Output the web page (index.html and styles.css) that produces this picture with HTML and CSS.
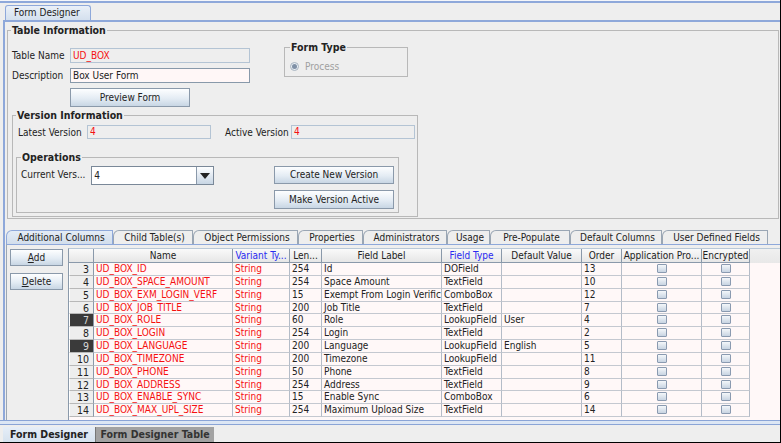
FILE: index.html
```html
<!DOCTYPE html>
<html>
<head>
<meta charset="utf-8">
<link rel="stylesheet" href="styles.css">
</head>
<body>
<div class="window">
  <div class="topline"></div>
  <div class="toptabs"><div class="ttab">Form Designer</div></div>
  <div class="main">
    <fieldset class="tinfo">
      <legend>Table Information</legend>
      <div class="toprow">
        <div class="leftcol">
          <div class="frow"><span class="lbl">Table Name</span><span class="field ro red">UD_BOX</span></div>
          <div class="frow"><span class="lbl">Description</span><span class="field ed">Box User Form</span></div>
          <div class="btn preview">Preview Form</div>
        </div>
        <fieldset class="ftype">
          <legend>Form Type</legend>
          <div class="radiorow"><span class="radio"><span class="dot"></span></span><span class="dis">Process</span></div>
        </fieldset>
      </div>
      <fieldset class="vinfo">
        <legend>Version Information</legend>
        <div class="vrow">
          <span class="lbl lv">Latest Version</span><span class="field ro red vf">4</span>
          <span class="lbl av">Active Version</span><span class="field ro red vf">4</span>
        </div>
        <fieldset class="ops">
          <legend>Operations</legend>
          <div class="orow">
            <span class="lbl cv">Current Vers...</span>
            <div class="combo"><span class="cval">4</span><span class="carrow"><svg width="10" height="6" viewBox="0 0 10 6"><path d="M0 0H10L5 6Z" fill="#222"/></svg></span></div>
            <div class="obtns">
              <div class="btn obtn">Create New Version</div>
              <div class="btn obtn">Make Version Active</div>
            </div>
          </div>
        </fieldset>
      </fieldset>
    </fieldset>

    <div class="tabs">
      <div class="tab sel w1">Additional Columns</div>
      <div class="tab w2">Child Table(s)</div>
      <div class="tab w3">Object Permissions</div>
      <div class="tab w4">Properties</div>
      <div class="tab w5">Administrators</div>
      <div class="tab w6">Usage</div>
      <div class="tab w7">Pre-Populate</div>
      <div class="tab w8">Default Columns</div>
      <div class="tab w9">User Defined Fields</div>
    </div>

    <div class="tabbody">
      <div class="side">
        <div class="btn sbtn"><u>A</u>dd</div>
        <div class="btn sbtn"><u>D</u>elete</div>
      </div>
      <div class="scroll">
        <div class="grid">
          <div class="h"></div>
          <div class="h">Name</div>
          <div class="h blue">Variant Ty...</div>
          <div class="h">Len...</div>
          <div class="h">Field Label</div>
          <div class="h blue">Field Type</div>
          <div class="h">Default Value</div>
          <div class="h">Order</div>
          <div class="h">Application Pro...</div>
          <div class="h">Encrypted</div>

          <div class="n">3</div><div class="c red">UD_BOX_ID</div><div class="c red">String</div><div class="c">254</div><div class="c">Id</div><div class="c">DOField</div><div class="c"></div><div class="c">13</div><div class="c cb"><span class="chk"></span></div><div class="c cb"><span class="chk"></span></div>
          <div class="n">4</div><div class="c red">UD_BOX_SPACE_AMOUNT</div><div class="c red">String</div><div class="c">254</div><div class="c">Space Amount</div><div class="c">TextField</div><div class="c"></div><div class="c">10</div><div class="c cb"><span class="chk"></span></div><div class="c cb"><span class="chk"></span></div>
          <div class="n">5</div><div class="c red">UD_BOX_EXM_LOGIN_VERF</div><div class="c red">String</div><div class="c">15</div><div class="c">Exempt From Login Verifica</div><div class="c">ComboBox</div><div class="c"></div><div class="c">12</div><div class="c cb"><span class="chk"></span></div><div class="c cb"><span class="chk"></span></div>
          <div class="n">6</div><div class="c red">UD_BOX_JOB_TITLE</div><div class="c red">String</div><div class="c">200</div><div class="c">Job Title</div><div class="c">TextField</div><div class="c"></div><div class="c">7</div><div class="c cb"><span class="chk"></span></div><div class="c cb"><span class="chk"></span></div>
          <div class="n dark">7</div><div class="c red">UD_BOX_ROLE</div><div class="c red">String</div><div class="c">60</div><div class="c">Role</div><div class="c">LookupField</div><div class="c">User</div><div class="c">4</div><div class="c cb"><span class="chk"></span></div><div class="c cb"><span class="chk"></span></div>
          <div class="n">8</div><div class="c red">UD_BOX_LOGIN</div><div class="c red">String</div><div class="c">254</div><div class="c">Login</div><div class="c">TextField</div><div class="c"></div><div class="c">2</div><div class="c cb"><span class="chk"></span></div><div class="c cb"><span class="chk"></span></div>
          <div class="n dark">9</div><div class="c red">UD_BOX_LANGUAGE</div><div class="c red">String</div><div class="c">200</div><div class="c">Language</div><div class="c">LookupField</div><div class="c">English</div><div class="c">5</div><div class="c cb"><span class="chk"></span></div><div class="c cb"><span class="chk"></span></div>
          <div class="n">10</div><div class="c red">UD_BOX_TIMEZONE</div><div class="c red">String</div><div class="c">200</div><div class="c">Timezone</div><div class="c">LookupField</div><div class="c"></div><div class="c">11</div><div class="c cb"><span class="chk"></span></div><div class="c cb"><span class="chk"></span></div>
          <div class="n">11</div><div class="c red">UD_BOX_PHONE</div><div class="c red">String</div><div class="c">50</div><div class="c">Phone</div><div class="c">TextField</div><div class="c"></div><div class="c">8</div><div class="c cb"><span class="chk"></span></div><div class="c cb"><span class="chk"></span></div>
          <div class="n">12</div><div class="c red">UD_BOX_ADDRESS</div><div class="c red">String</div><div class="c">254</div><div class="c">Address</div><div class="c">TextField</div><div class="c"></div><div class="c">9</div><div class="c cb"><span class="chk"></span></div><div class="c cb"><span class="chk"></span></div>
          <div class="n">13</div><div class="c red">UD_BOX_ENABLE_SYNC</div><div class="c red">String</div><div class="c">15</div><div class="c">Enable Sync</div><div class="c">ComboBox</div><div class="c"></div><div class="c">6</div><div class="c cb"><span class="chk"></span></div><div class="c cb"><span class="chk"></span></div>
          <div class="n">14</div><div class="c red">UD_BOX_MAX_UPL_SIZE</div><div class="c red">String</div><div class="c">254</div><div class="c">Maximum Upload Size</div><div class="c">TextField</div><div class="c"></div><div class="c">14</div><div class="c cb"><span class="chk"></span></div><div class="c cb"><span class="chk"></span></div>
        </div>
      </div>
    </div>
  </div>
  <div class="sep"></div>
  <div class="btabs">
    <div class="btab bsel">Form Designer</div>
    <div class="btab boff">Form Designer Table</div>
  </div>
</div>
</body>
</html>
```

FILE: styles.css
```css
* { box-sizing: border-box; }
html, body { margin: 0; padding: 0; }
body {
  width: 781px; height: 443px; overflow: hidden;
  background: #eeeeee;
  font-family: "DejaVu Sans Condensed", "DejaVu Sans", sans-serif;
  font-stretch: condensed;
  font-size: 10px;
  color: #222;
}
.window {
  width: 781px; height: 443px;
  display: flex; flex-direction: column;
  border-right: 1px solid #000;
  border-bottom: 1px solid #000;
  background: #eeeeee;
}
.topline { height: 3px; border-top: 1px solid #f4f6fa; background: #8ea8da; flex: none; }
.toptabs { height: 17px; padding-left: 5px; display: flex; align-items: flex-end; flex: none; }
.ttab {
  width: 86px; height: 15px; line-height: 14px;
  padding-left: 8px;
  background: linear-gradient(#eaf0f8, #d4e0ee);
  border: 1px solid #8ea8da; border-bottom: none;
  border-radius: 3px 3px 0 0;
  color: #222;
}
.main {
  flex: none; height: 400px;
  margin-left: 3px;
  border-top: 2px solid #8ea8da;
  border-left: 2px solid #8ea8da;
  display: flex; flex-direction: column;
}
fieldset { margin: 0; min-width: 0; border: 1px solid #b8b8b8; }
legend {
  font-weight: bold; font-size: 10.5px; line-height: 12px;
  padding: 0 1px; margin-left: -1px; color: #222;
}
.tinfo { margin: 2px 0 0 2px; padding: 0 4px; width: 772px; height: 195px; flex: none; }
.toprow { display: flex; align-items: flex-start; }
.leftcol { padding-top: 12px; width: 238px; }
.frow { display: flex; align-items: center; height: 15px; margin-bottom: 5px; }
.lbl { color: #222; white-space: nowrap; }
.frow .lbl { width: 58px; }
.field {
  display: block; height: 15px; line-height: 13px; padding-left: 2px;
  border: 1px solid #b4c4d4; white-space: nowrap; overflow: hidden;
}
.frow .field { width: 180px; }
.field.ro { background: #eeeeee; }
.field.ed { background: #fff7f7; border-color: #8899aa; }
.red { color: #f51010; }
.btn {
  height: 19px; line-height: 17px; text-align: center;
  border: 1px solid #8a99aa;
  background: linear-gradient(#fdfeff, #e4ecf4 55%, #c8d6e4);
  color: #222; white-space: nowrap;
}
.preview { width: 120px; margin-left: 58px; }
.ftype { margin: 5px 0 0 34px; width: 124px; height: 36px; padding: 0 5px; }
.ftype legend { margin-left: 0; }
.radiorow { display: flex; align-items: center; margin-top: 8px; }
.radio {
  width: 9px; height: 9px; border-radius: 50%;
  border: 1px solid #a8b4c0; background: #e8eef4;
  display: flex; align-items: center; justify-content: center;
  margin-right: 6px;
}
.dot { width: 5px; height: 5px; border-radius: 50%; background: #7f90a6; }
.dis { color: #a0a0a0; }
.vinfo { margin-top: 2px; width: 406px; height: 108px; padding: 0 1px 0 4px; }
.vrow { display: flex; align-items: center; margin-top: 4px; height: 14px; }
.lv { width: 70px; padding-left: 1px; }
.av { width: 66px; margin-left: 14px; }
.vf { width: 124px; height: 14px; line-height: 12px; }
.ops { margin: 12px 0 0 -1px; width: 383px; height: 62px; padding: 0 4px; }
.ops legend { margin-left: 0; }
.orow { display: flex; align-items: flex-start; margin-top: 3px; }
.cv { width: 71px; margin-top: 3px; }
.combo {
  width: 124px; height: 19px; display: flex;
  border: 1px solid #7a8898; background: #fff;
}
.cval { flex: 1; line-height: 17px; padding-left: 2px; }
.carrow {
  width: 17px; border-left: 1px solid #8a99aa;
  background: linear-gradient(#fdfeff, #dfe7f0 55%, #c8d6e4);
  display: flex; align-items: center; justify-content: center;
}
.obtns { margin-left: 60px; display: flex; flex-direction: column; gap: 6px; }
.obtn { width: 120px; height: 18px; line-height: 16px; }
.obtn + .obtn { height: 19px; line-height: 17px; }

.tabs { display: flex; margin: 11px 0 0 1px; height: 14px; flex: none; align-items: flex-end; }
.tab {
  height: 14px; line-height: 13px; text-align: center;
  border: 1px solid #9aa6b4; border-bottom: none;
  border-radius: 6px 0 0 0;
  background: #eeeeee; color: #222; white-space: nowrap;
  padding-left: 3px;
}
.tab.sel { background: linear-gradient(#e4ecf6, #d2deec); border-color: #8ea8da; }
.w1 { width: 107px; } .w2 { width: 80px; } .w3 { width: 105px; } .w4 { width: 65px; }
.w5 { width: 84px; } .w6 { width: 43px; } .w7 { width: 80px; } .w8 { width: 92px; }
.w9 { width: 106px; }

.tabbody {
  flex: 1; display: flex; align-items: flex-start;
  margin-left: 1px;
  border-top: 1px solid #8ea8da;
  border-left: 1px solid #9aa6b4;
  padding: 3px 0 0 3px;
}
.side { width: 53px; margin-right: 5px; display: flex; flex-direction: column; gap: 7px; margin-top: 1px; }
.sbtn { height: 17px; line-height: 15px; }
.scroll {
  flex: 1; height: 172px;
  background: linear-gradient(#f0f0f0 0, #e8e8e8 14px, #fff8f8 14px);
  border-top: 1px solid #b8c8d8;
  border-left: 1px solid #8a99aa;
}
.grid {
  display: grid;
  grid-template-columns: 25px 139px 57px 32px 120px 60px 80px 40px 80px 48px;
  grid-auto-rows: 12.85px;
  grid-template-rows: 14px;
  width: 681px;
  border-right: 1px solid #a8b4c0;
}
.h {
  height: 14px; line-height: 13px; text-align: center;
  background: linear-gradient(#fafafa, #e6e6e6);
  border-right: 1px solid #8a99aa;
  border-bottom: 1px solid #8a99aa;
  color: #222; white-space: nowrap; overflow: hidden;
}
.h.blue { color: #2a2af0; }
.c {
  line-height: 12px; padding-left: 2px; white-space: nowrap; overflow: hidden;
  border-right: 1px solid #b4bcc8;
  border-bottom: 1px solid #c4c8d0;
  background: #fff8f8;
  font-size: 10px;
}
.c.red { color: #f51010; }
.n {
  text-align: right; padding-right: 4px; line-height: 12px;
  background: #eeeeee;
  border-right: 1px solid #8a99aa;
  border-bottom: 1px solid #b8b8b8;
  border-left: 1px solid #fff;
  font-size: 10.5px;
}
.n.dark {
  background: #3a3a3a;
  background-image: radial-gradient(#222 40%, transparent 45%);
  background-size: 2px 2px;
  color: #d8d8d8;
}
.cb { display: flex; justify-content: center; padding-left: 0; }
.chk {
  display: block; width: 10px; height: 9px; margin-top: 1px;
  border: 1px solid #8a9ab0; border-radius: 1px;
  background: linear-gradient(#f4f7fa, #c8d4e2);
}

.sep {
  flex: none; height: 5px;
  border-top: 1px solid #8aa4d6;
  border-bottom: 1px solid #8aa4d6;
  background: #dce6f4;
}
.btabs { flex: none; height: 17px; padding: 2px 0 0 3px; display: flex; }
.btab {
  height: 15px; line-height: 15px; font-weight: bold; font-size: 10.5px;
  white-space: nowrap; text-align: center;
}
.bsel { width: 92px; background: linear-gradient(#e6eef8, #d6e2ee); color: #222; }
.boff { width: 119px; background: #a2a2a2; color: #333; border-left: 1px solid #777; }
```
